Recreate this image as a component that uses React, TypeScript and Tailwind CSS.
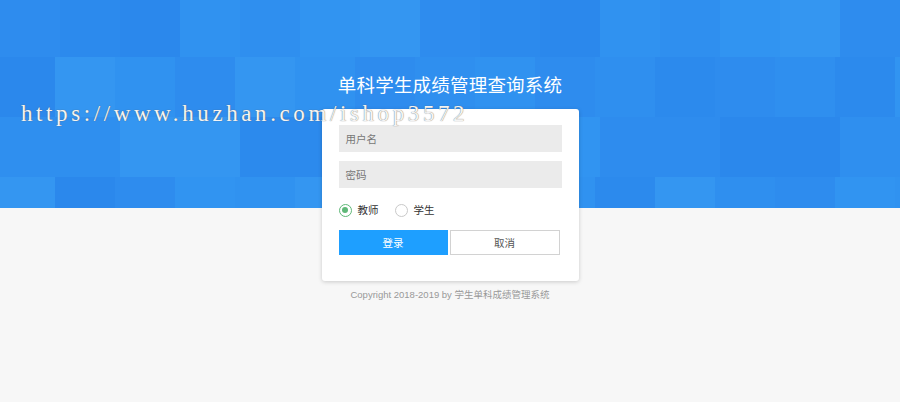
import React from 'react';

const palette = ['#2e8cee', '#3092f0', '#3496f1', '#2b88ec', '#3194f1', '#2c8aed', '#2f8fef'];

// mosaic of squares in the header band
function Mosaic() {
  const rows = [0, 57, 117, 177];
  const heights = [57, 60, 60, 31];
  const tiles: React.ReactNode[] = [];
  rows.forEach((y, r) => {
    for (let c = 0; c < 16; c++) {
      const off = r % 2 === 1 ? -5 : 0;
      const color = palette[(c * 5 + r * 3 + ((c * r) % 4)) % palette.length];
      tiles.push(<rect key={`${r}-${c}`} x={c * 60 + off} y={y} width={60} height={heights[r]} fill={color} />);
    }
  });
  return (
    <svg className="absolute inset-0 w-full h-full" viewBox="0 0 900 208" preserveAspectRatio="none">
      {tiles}
    </svg>
  );
}

export default function App() {
  const font = { fontFamily: '"Noto Sans CJK SC", "Noto Sans", sans-serif' };

  return (
    <div className="relative w-[900px] h-[402px] bg-[#f7f7f7] overflow-hidden" style={font}>
      <div className="relative h-[208px] bg-[#2e8cee]">
        <Mosaic />
      </div>

      <div className="absolute inset-x-0 top-0 flex flex-col items-center">
        <h1 className="mt-[70px] text-[18.5px] leading-[28px] text-white tracking-[0.2px]">单科学生成绩管理查询系统</h1>

        <div className="mt-[11px] w-[257px] bg-white rounded-[3px] shadow-[0_1px_4px_rgba(0,0,0,0.18)] px-[17px] pt-[16px] pb-[26px]">
          <div className="h-[27px] bg-[#ebebeb] flex items-center px-[7px] text-[10.5px] text-[#777]">用户名</div>
          <div className="mt-[9px] h-[27px] bg-[#ebebeb] flex items-center px-[7px] text-[10.5px] text-[#777]">密码</div>

          <div className="mt-[14px] flex items-center h-[16px] text-[10.5px] text-[#333]">
            <span className="w-[13px] h-[13px] rounded-full border border-[#5fb878] flex items-center justify-center">
              <span className="w-[6px] h-[6px] rounded-full bg-[#5fb878]" />
            </span>
            <span className="ml-[6px]">教师</span>
            <span className="ml-[16px] w-[13px] h-[13px] rounded-full border border-[#c9c9c9]" />
            <span className="ml-[6px]">学生</span>
          </div>

          <div className="mt-[12px] flex gap-[2px]">
            <button className="w-[109px] h-[25px] bg-[#1e9fff] text-white text-[10.5px]">登录</button>
            <button className="w-[110px] h-[25px] bg-white border border-[#d2d2d2] text-[#555] text-[10.5px]">取消</button>
          </div>
        </div>

        <p className="mt-[7px] text-[9.5px] text-[#999]" style={{ fontFamily: '"Liberation Sans", "Noto Sans CJK SC", sans-serif' }}>
          Copyright 2018-2019 by 学生单科成绩管理系统
        </p>
      </div>

      <div
        className="absolute left-[21px] top-[98px] text-[23px] leading-[32px] tracking-[3.6px] text-[#f4f4f4] [text-shadow:0_0_1px_#555] pointer-events-none whitespace-nowrap"
        style={{ fontFamily: '"Liberation Serif", serif' }}
      >
        https://www.huzhan.com/ishop3572
      </div>
    </div>
  );
}
